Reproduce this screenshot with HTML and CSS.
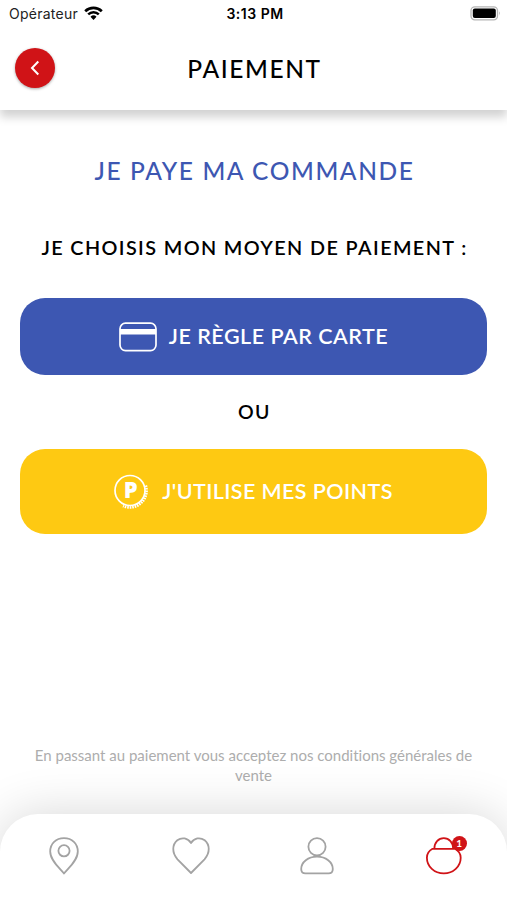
FILE: index.html
```
<!DOCTYPE html>
<html lang="fr">

<head>
    <meta charset="UTF-8">
    <meta name="viewport" content="width=device-width, initial-scale=1.0">
    <title>Paiement</title>
    <link rel="stylesheet" href="styles.css">
</head>

<body>
    <div class="status-bar">
        <div class="carrier">
            <span>Opérateur</span>
            <svg width="19" height="14" viewBox="0 0 19 14">
                <path d="M1.2 5.2 A12 12 0 0 1 17.8 5.2" fill="none" stroke="#000" stroke-width="2.7" />
                <path d="M4.2 8.3 A7.6 7.6 0 0 1 14.8 8.3" fill="none" stroke="#000" stroke-width="2.5" />
                <path d="M6.5 10.8 A4.3 4.3 0 0 1 12.5 10.8 L9.5 14 Z" />
            </svg>
        </div>
        <span class="time">3:13 PM</span>
        <svg class="battery" width="31" height="15" viewBox="0 0 31 15">
            <rect x="1" y=".8" width="26.5" height="13" rx="3.8" fill="#fff" stroke="#b5b5b5" stroke-width="1.3" />
            <rect x="2.8" y="2.5" width="23" height="9.6" rx="2" />
            <path d="M29 5.2 q1.8 2.1 0 4.2 z" fill="#aaa" />
        </svg>
    </div>

    <header class="header">
        <button class="back" aria-label="Retour">
            <svg width="10" height="16" viewBox="0 0 10 16">
                <path d="M8.3 1.5 L2 8 L8.3 14.5" />
            </svg>
        </button>
        <h1>PAIEMENT</h1>
    </header>

    <main class="content">
        <h2>JE PAYE MA COMMANDE</h2>
        <h3>JE CHOISIS MON MOYEN DE PAIEMENT :</h3>

        <button class="btn btn-card">
            <svg width="38" height="30" viewBox="0 0 38 30">
                <rect x="1" y="1.2" width="36" height="27.4" rx="5.5" fill="none" stroke="#fff" stroke-width="1.7" />
                <rect x="1" y="7" width="36" height="5.5" fill="#fff" />
            </svg>
            <span class="label">JE RÈGLE PAR CARTE</span>
        </button>

        <p class="or">OU</p>

        <button class="btn btn-points">
            <svg width="34" height="35" viewBox="0 0 34 35">
                <circle cx="16" cy="16.5" r="15" fill="none" stroke="#fff" stroke-width="1.7" />
                <path d="M31.8 11.5 A16.8 16.8 0 0 1 9 32" fill="none" stroke="#fff" stroke-width="2.6" stroke-dasharray="1.6 .9" />
                <text class="coin-letter" x="16.7" y="24.3" text-anchor="middle">P</text>
            </svg>
            <span class="label">J'UTILISE MES POINTS</span>
        </button>

        <p class="terms">En passant au paiement vous acceptez nos conditions générales de<br>vente</p>
    </main>

    <nav class="tabs">
        <a class="tab">
            <svg width="38" height="40" viewBox="0 0 38 40">
                <path d="M19 37.5 C14.5 32 5.2 24.5 5.2 15.5 C5.2 7.5 11 2.2 19 2.2 C27 2.2 32.8 7.5 32.8 15.5 C32.8 24.5 23.5 32 19 37.5 Z" />
                <circle cx="19" cy="14.8" r="5.6" />
            </svg>
        </a>
        <a class="tab">
            <svg width="38" height="40" viewBox="0 0 38 40">
                <path d="M19 37 L5.5 23.3 C-.5 16.5 .3 8.5 5.3 4.3 C10 .8 15.8 2 19 7 C22.2 2 28 .8 32.7 4.3 C37.7 8.5 38.5 16.5 32.5 23.3 Z" />
            </svg>
        </a>
        <a class="tab">
            <svg width="38" height="40" viewBox="0 0 38 40">
                <circle cx="19" cy="10.7" r="8.6" />
                <path d="M3.2 33 C3.2 26 10.2 20.7 19 20.7 C27.8 20.7 34.8 26 34.8 33 C34.8 35.8 33.2 37.4 30.6 37.4 H7.4 C4.8 37.4 3.2 35.8 3.2 33 Z" />
            </svg>
        </a>
        <a class="tab active">
            <svg width="38" height="40" viewBox="0 0 38 40">
                <path d="M7.5 12.8 H30 C33.5 14.8 35.7 18 35.7 21.7 C35.7 30.5 28.2 37.4 18.8 37.4 C9.4 37.4 1.9 30.5 1.9 21.7 C1.9 18 4 14.8 7.5 12.8 Z" />
                <path d="M9.3 12.8 C9.3 6.5 13.5 2.2 18.8 2.2 C24 2.2 28.2 6.5 28.2 12.8" />
            </svg>
            <span class="badge">1</span>
        </a>
    </nav>
</body>

</html>
```
FILE: styles.css
```
* {
    box-sizing: border-box;
}

body {
    margin: 0;
    height: 900px;
    display: flex;
    flex-direction: column;
    overflow: hidden;
    background: #fff;
    font-family: Lato, sans-serif;
    font-variant-ligatures: none;
    color: #000;
}

h1,
h2,
h3,
p {
    margin: 0;
    white-space: nowrap;
    text-align: center;
}

svg {
    display: block;
}

.status-bar {
    z-index: 1;
    display: grid;
    grid-template-columns: 1fr auto 1fr;
    align-items: center;
    height: 27px;
    padding: 0 6px 0 9px;
    background: #fff;
    font-family: Inter, sans-serif;
    font-size: 14px;
}

.carrier {
    display: flex;
    align-items: center;
    gap: 6px;
    color: #222;
    letter-spacing: 0.25px;
}

.carrier svg {
    margin-top: -2px;
}

.time {
    font-weight: 600;
    font-size: 14px;
    letter-spacing: 0.5px;
}

.battery {
    justify-self: end;
    margin-top: -1px;
}

.header {
    display: grid;
    grid-template-columns: 40px 1fr 40px;
    align-items: center;
    height: 83px;
    padding: 0 15px 1px;
    box-shadow: 0 7px 9px rgba(0, 0, 0, 0.18);
}

.back {
    display: flex;
    align-items: center;
    justify-content: center;
    width: 40px;
    height: 40px;
    padding: 0;
    border: none;
    border-radius: 50%;
    background: #d01317;
    box-shadow: 0 1px 3px rgba(0, 0, 0, 0.35);
}

.back path {
    fill: none;
    stroke: #fff;
    stroke-width: 2;
}

h1 {
    padding-left: 2px;
    font-size: 24.5px;
    font-weight: 500;
    letter-spacing: 1.6px;
}

.content {
    flex: 1;
    display: flex;
    flex-direction: column;
    padding: 43px 20px 0;
}

h2 {
    padding-left: 2px;
    font-size: 24.5px;
    font-weight: 500;
    line-height: 36px;
    letter-spacing: 1.6px;
    color: #3d57b2;
}

h3 {
    margin-top: 43px;
    padding-left: 2px;
    font-size: 19.8px;
    font-weight: 600;
    line-height: 30px;
    letter-spacing: 1.4px;
}

.btn {
    display: flex;
    align-items: center;
    justify-content: center;
    flex-shrink: 0;
    width: 467px;
    border: none;
    border-radius: 25px;
    color: #fff;
    font-family: Lato, sans-serif;
    font-size: 21.5px;
    font-weight: 600;
    letter-spacing: 0.5px;
}

.label {
    padding-bottom: 1px;
    white-space: nowrap;
}

.btn-card {
    height: 77px;
    margin-top: 36px;
    gap: 12px;
    background: #3d57b2;
}

.btn-points {
    height: 85px;
    gap: 14px;
    background: #fec912;
    letter-spacing: 0.4px;
}

.coin-letter {
    fill: #fff;
    font-family: "Open Sans", sans-serif;
    font-size: 22px;
    font-weight: 800;
    letter-spacing: 0;
}

.or {
    height: 74px;
    padding-left: 2px;
    font-size: 19.5px;
    font-weight: 600;
    line-height: 73px;
    letter-spacing: 1.4px;
}

.terms {
    margin-top: 212px;
    font-size: 15px;
    line-height: 19.5px;
    color: #adadad;
}

.tabs {
    display: grid;
    grid-template-columns: repeat(4, 1fr);
    height: 86px;
    padding: 22px 0 0 1px;
    border-radius: 38px 38px 0 0;
    background: #fff;
    box-shadow: 0 0 50px rgba(0, 0, 0, 0.16);
}

.tab {
    position: relative;
    justify-self: center;
    width: 38px;
    height: 40px;
}

.tab svg {
    fill: none;
    stroke: #a3a3a3;
    stroke-width: 1.8;
    stroke-linejoin: round;
}

.tab.active svg {
    stroke: #d01317;
}

.badge {
    position: absolute;
    top: 0;
    right: -4px;
    width: 15px;
    height: 15px;
    border-radius: 50%;
    background: #d01317;
    color: #fff;
    font-size: 10px;
    font-weight: 700;
    line-height: 15px;
    text-align: center;
}
```
